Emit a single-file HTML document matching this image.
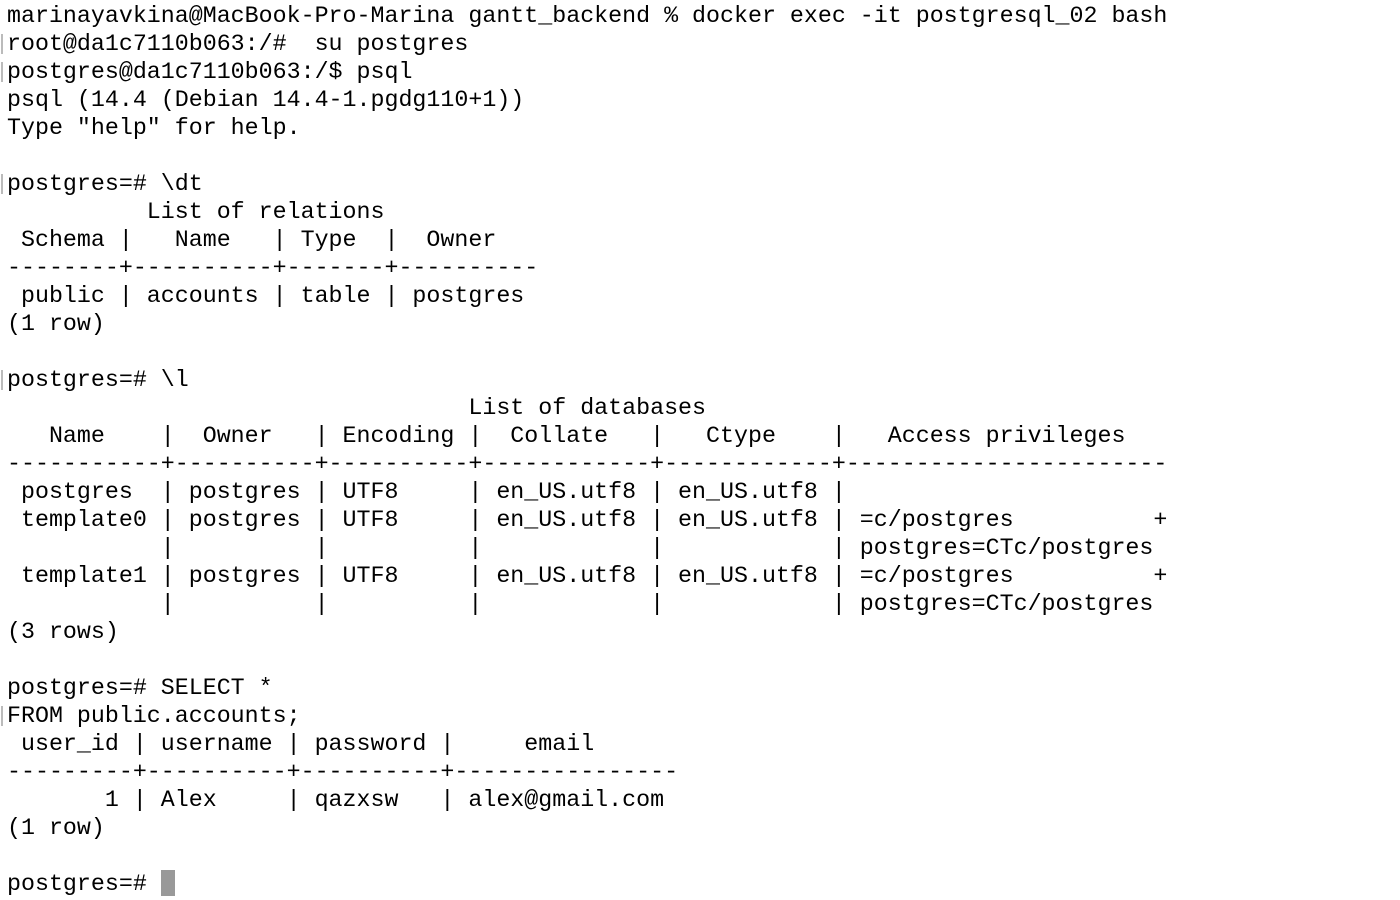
<!DOCTYPE html>
<html><head><meta charset="utf-8"><style>
html,body{margin:0;padding:0;background:#fff;width:1400px;height:900px;overflow:hidden}
pre{margin:0;position:absolute;left:7px;top:2px;font-family:"Liberation Mono","DejaVu Sans Mono",monospace;font-size:23.3px;line-height:28px;color:#000;white-space:pre}
.m{position:absolute;left:1px;width:2px;height:20px;background:#bbb}
.cur{display:inline-block;width:14px;height:26px;background:#999;vertical-align:-6px}
</style></head><body>
<div class="m" style="top:34px"></div>
<div class="m" style="top:62px"></div>
<div class="m" style="top:174px"></div>
<div class="m" style="top:370px"></div>
<div class="m" style="top:706px"></div>
<pre>marinayavkina@MacBook-Pro-Marina gantt_backend % docker exec -it postgresql_02 bash
root@da1c7110b063:/#  su postgres
postgres@da1c7110b063:/$ psql
psql (14.4 (Debian 14.4-1.pgdg110+1))
Type "help" for help.

postgres=# \dt
          List of relations
 Schema |   Name   | Type  |  Owner
--------+----------+-------+----------
 public | accounts | table | postgres
(1 row)

postgres=# \l
                                 List of databases
   Name    |  Owner   | Encoding |  Collate   |   Ctype    |   Access privileges
-----------+----------+----------+------------+------------+-----------------------
 postgres  | postgres | UTF8     | en_US.utf8 | en_US.utf8 |
 template0 | postgres | UTF8     | en_US.utf8 | en_US.utf8 | =c/postgres          +
           |          |          |            |            | postgres=CTc/postgres
 template1 | postgres | UTF8     | en_US.utf8 | en_US.utf8 | =c/postgres          +
           |          |          |            |            | postgres=CTc/postgres
(3 rows)

postgres=# SELECT *
FROM public.accounts;
 user_id | username | password |     email
---------+----------+----------+----------------
       1 | Alex     | qazxsw   | alex@gmail.com
(1 row)

postgres=# <span class="cur"></span></pre>
</body></html>
